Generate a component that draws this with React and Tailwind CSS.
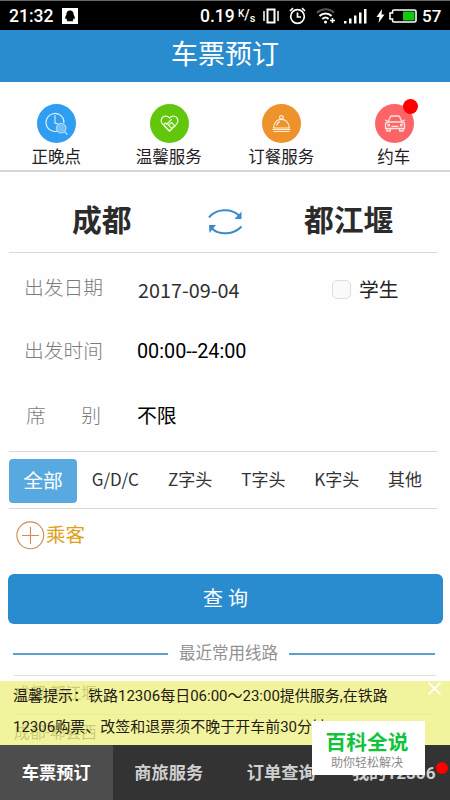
import React, { useState } from 'react';

const services = [
  { name: '正晚点', color: 'bg-[#2f9df0]', icon: 'clock' },
  { name: '温馨服务', color: 'bg-[#62c60c]', icon: 'heart' },
  { name: '订餐服务', color: 'bg-[#ee922c]', icon: 'meal' },
  { name: '约车', color: 'bg-[#fd6468]', icon: 'car', dot: true }
];

const trainTypes = [
  { name: 'G/D/C', width: 'w-[77px]' },
  { name: 'Z字头', width: 'w-[73px]' },
  { name: 'T字头', width: 'w-[74px]' },
  { name: 'K字头', width: 'w-[73px]' },
  { name: '其他', width: 'w-[64px]' }
];

const recentRoutes = ['成都-都江堰', '成都-郫县西'];

const navItems = ['车票预订', '商旅服务', '订单查询', '我的12306'];

const ServiceIcon = ({ type }) => {
  if (type === 'clock') {
    return (
      <svg width="39" height="39" viewBox="0 0 39 39" fill="none" stroke="#d8f0ff" strokeWidth="1.1">
        <path d="M20 27.2a9 9 0 1 1 7-8.2" />
        <path d="M18 11v8l4 1.5" />
        <circle cx="24.2" cy="24.2" r="4.8" fill="#74bff3" stroke="#a9dafb" />
        <path d="M27.8 27.8l2.6 2.8" />
      </svg>
    );
  }
  if (type === 'heart') {
    return (
      <svg width="39" height="39" viewBox="0 0 39 39" fill="none" stroke="#e6ffd0" strokeWidth="1.2" strokeLinejoin="round" strokeLinecap="round">
        <path d="M19.5 14c-2.2-3-6.8-2.4-8 .8-.8 2.3 0 4.2 1.4 5.6l6.6 6.8 6.8-6.8c1.4-1.4 2-3.3 1.2-5.6-1.2-3.2-5.8-3.8-8-.8z" />
        <path d="M21.5 15.5l-4.500 4.200c1 1 2.500.6 3.300-.4l1.200-.8 3.500 3.500M13.800 20.500l1.700-1.500 1 1.200 1.500-.2.300 1.500 1.500 0 .2 1.700 1.300.3" />
        <path d="M14.5 22l5 5 5-5" strokeWidth="1.6" />
      </svg>
    );
  }
  if (type === 'meal') {
    return (
      <svg width="39" height="39" viewBox="0 0 39 39" fill="none" stroke="#fff2db" strokeWidth="1.2">
        <circle cx="19.4" cy="13.3" r="1.8" />
        <path d="M11.5 24c.5-5.5 3.800-8.700 7.900-8.700s7.400 3.200 7.900 8.700z" strokeLinejoin="round" />
        <path d="M14.5 21.5c.6-2.2 1.700-3.300 3.300-3.900" />
        <path d="M10.5 25.5h18M11.5 27.5h16" />
      </svg>
    );
  }
  return (
    <svg width="39" height="39" viewBox="0 0 39 39" fill="none" stroke="#ffe3e0" strokeWidth="1.3" strokeLinejoin="round">
      <path d="M13 18l2.200-5c.3-.7.7-1 1.500-1h6.600c.8 0 1.200.3 1.500 1l2.200 5" />
      <path d="M10.5 24.500v-4c0-1.600 1-2.500 2.500-2.500h14c1.500 0 2.500.9 2.500 2.500v4z" />
      <path d="M11.8 24.500v2.500h3.500v-2.500M24.700 24.500v2.500h3.500v-2.500M10 16l2.500.8M30 16l-2.500.8M16.500 22.300h7" />
      <circle cx="13.700" cy="21" r=".9" />
      <circle cx="26.300" cy="21" r=".9" />
    </svg>
  );
};

const StatusBar = () => (
  <div className="flex h-[30px] items-center border-t border-[#666] bg-black pl-[9px] font-medium text-white">
    <span className="w-[53px] text-[17.5px] leading-[28px]">21:32</span>
    <svg width="16" height="16" viewBox="0 0 16 16">
      <rect width="16" height="16" fill="#fff" />
      <path d="M8 2.5c-2.5 0-3.800 1.800-3.600 4.200C3.500 8 3 9.500 3.200 11c.4.200.8-.3 1.100-.8.2.9.5 1.500 1.100 2-.6.3-.9.7-.7 1.100h6.600c.2-.4-.1-.8-.7-1.100.6-.5.9-1.100 1.100-2 .3.5.7 1 1.100.8.2-1.500-.3-3-1.200-4.300C11.800 4.300 10.500 2.500 8 2.500z" fill="#000" />
    </svg>
    <span className="ml-[122px] w-[38px] text-[17.5px] leading-[28px]">0.19</span>
    <span className="flex w-[25px] pt-[1px] text-[10px] leading-[10px]">
      <span>K</span>
      <span className="text-[14px] leading-[13px]">/</span>
      <span className="pt-[5px] text-[11px]">s</span>
    </span>
    <svg width="16" height="18" viewBox="0 0 16 18" fill="none" stroke="#fff">
      <rect x="4.5" y="2.5" width="7" height="13" strokeWidth="2" />
      <path d="M1 4v10M15 4v10" strokeWidth="1.5" />
    </svg>
    <svg className="ml-[10px]" width="17" height="18" viewBox="0 0 17 18" fill="none" stroke="#fff" strokeWidth="1.7">
      <circle cx="8.5" cy="9.5" r="6.8" />
      <path d="M8.5 5.5v4.500h3.500M1 4l3-2.800M16 4l-3-2.800" />
    </svg>
    <svg className="ml-[10px]" width="20" height="18" viewBox="0 0 20 18" fill="none" strokeWidth="2">
      <path d="M1 5.800c5-4.600 12.500-4.600 17 0" stroke="#555" />
      <path d="M3.5 9c3.500-3.500 8.800-3.500 12 0M6.300 12c2-1.800 4.600-1.800 6.300 0" stroke="#fff" />
      <circle cx="9.5" cy="15" r="1.5" fill="#fff" stroke="none" />
      <path d="M14 13.5h5M16.500 11v5" stroke="#fff" strokeWidth="1.6" />
    </svg>
    <svg className="ml-[8px]" width="24" height="16" viewBox="0 0 24 16" fill="#fff">
      <path d="M0 13h2.500v2.500H0zM5 10.500h2.500v5H5zM10 7.500h2.500v8H10zM15 4.500h2.500v11H15zM20 1h2.500v14.500H20z" />
    </svg>
    <svg className="ml-[8px]" width="9" height="14" viewBox="0 0 9 14" fill="#fff">
      <path d="M6 0L0.500 8h3L2.500 14 8.500 5.500h-3z" />
    </svg>
    <svg className="ml-[4px]" width="28" height="14" viewBox="0 0 28 14">
      <path d="M5 1h20.500q1.500 0 1.500 1.500v9q0 1.500-1.500 1.500H5q-1.500 0-1.500-1.500V10H1V4h2.500V2.500Q3.500 1 5 1z" fill="none" stroke="#fff" strokeWidth="1.6" />
      <rect x="14" y="2.500" width="11.500" height="9" fill="#12c912" />
    </svg>
    <span className="ml-[5px] text-[17px] leading-[28px]">57</span>
  </div>
);

const FormRow = ({ label, value, height, valueClass, children }) => (
  <div className={`flex items-center pl-[24px] ${height}`}>
    <div className="w-[113px] text-[19.8px] leading-[26px] font-light text-[#7c7c7c]">{label}</div>
    <div className={`text-[19.8px] leading-[26px] ${valueClass}`}>{value}</div>
    {children}
  </div>
);

const App = () => {
  const [active, setActive] = useState(0);
  const [student, setStudent] = useState(false);
  const [showNotice, setShowNotice] = useState(true);

  return (
    <div className="relative flex h-[800px] w-[450px] flex-col overflow-hidden bg-[#fefefe] font-[Roboto,'Noto_Sans_CJK_SC',sans-serif] whitespace-nowrap">
      <StatusBar />
      <header className="flex h-[52px] items-center justify-center bg-[#298ccf] pb-[3px] text-[27px] leading-[36px] text-white">
        车票预订
      </header>

      <div className="grid h-[90px] grid-cols-4 border-b-2 border-[#d5d7d7] pt-[22px]">
        {services.map(item => (
          <div key={item.name} className="flex flex-col items-center">
            <div className={`relative left-[.5px] h-[39px] w-[39px] rounded-full ${item.color}`}>
              <ServiceIcon type={item.icon} />
              {item.dot && <span className="absolute -top-[5px] -right-[4px] h-[15px] w-[15px] rounded-full bg-[#fe0000]" />}
            </div>
            <span className="mt-[3px] text-[16.5px] leading-[24px] text-[#251c24]">{item.name}</span>
          </div>
        ))}
      </div>

      <div className="mr-[13px] ml-[9px] flex h-[81px] items-center border-b border-[#d8d8d8] pt-[19px] text-[29.8px] leading-[40px] font-bold text-[#2b2b2b]">
        <span className="w-[199px] pb-[2px] pl-[63px]">成都</span>
        <svg width="34" height="26" viewBox="0 0 34 26" fill="none" stroke="#3a8cca" strokeWidth="2">
          <path d="M1 8.500C8-.5 23-1 31 6.500M33.500 17.500C26 26 11 26.500 4 19.500" />
          <path d="M33.500 2.500v7.500h-7zM1 16h7l-6.500 8z" fill="#3a8cca" stroke="none" />
        </svg>
        <span className="pb-[2px] pl-[62px]">都江堰</span>
      </div>

      <div className="h-[198px]">
        <FormRow
          label={<span className="relative -top-px">出发日期</span>}
          value="2017-09-04"
          height="h-[68px] pt-[5px]"
          valueClass="w-[195px] pl-px font-['Noto_Sans_CJK_SC',sans-serif] text-[#303030]"
        >
          <button
            type="button"
            onClick={() => setStudent(!student)}
            className={`h-[19px] w-[19px] rounded-[5px] border border-[#dedede] ${student ? 'bg-[#298ccf]' : 'bg-[#fafafa]'}`}
          />
          <span className="ml-[8px] pt-[2px] text-[19.8px] leading-[26px] text-[#252525]">学生</span>
        </FormRow>
        <FormRow label="出发时间" value="00:00--24:00" height="h-[60px] pt-px" valueClass="text-black" />
        <FormRow
          label={
            <div className="flex w-[77px] justify-between pl-[2px]">
              <span>席</span>
              <span>别</span>
            </div>
          }
          value="不限"
          height="h-[70px] pt-[2px]"
          valueClass="text-black"
        />
      </div>

      <div className="mr-[13px] ml-[9px] flex h-[58px] items-start border-y border-[#d8d8d8] pt-[7px] font-['Noto_Sans_CJK_SC',sans-serif]">
        <div className="flex h-[44px] w-[68px] items-center justify-center rounded-[4px] bg-[#58a9df] pb-[2px] text-[19.8px] leading-[26px] text-white">
          全部
        </div>
        {trainTypes.map(item => (
          <div key={item.name} className={`flex h-[39px] items-center justify-center text-[17px] leading-[24px] text-[#333] ${item.width}`}>
            {item.name}
          </div>
        ))}
      </div>

      <div className="flex h-[65px] items-start pt-[12px] pl-[16px]">
        <svg width="29" height="29" viewBox="0 0 29 29" fill="none" stroke="#cf8b50" strokeWidth="1.1">
          <circle cx="14.3" cy="14.3" r="13.4" />
          <path d="M6 14.5h17M14.5 6v17" />
        </svg>
        <span className="ml-[1px] pt-[2px] text-[19.5px] leading-[26px] text-[#dfa019]">乘客</span>
      </div>

      <button type="button" className="mr-[7px] ml-[8px] h-[50px] rounded-[6px] bg-[#298ccf] text-[20px] leading-[26px] text-white">
        查 询
      </button>

      <div className="mr-[15px] ml-[13px] flex h-[51px] items-center pt-[8px]">
        <div className="h-[2px] w-[155px] bg-[#5f9fcb]" />
        <span className="w-[121px] pt-px text-center text-[16.5px] leading-[24px] text-[#929292]">最近常用线路</span>
        <div className="h-[2px] flex-1 bg-[#5f9fcb]" />
      </div>

      {/* el aviso tapa parte de esta lista */}
      <div className="mr-[14px] ml-[14px] h-[70px] overflow-hidden">
        {recentRoutes.map(route => (
          <div key={route} className="flex h-[39px] items-center border-t border-[#dedede] pb-[3px] text-[15.7px] leading-[24px] text-[#222]">
            {route}
          </div>
        ))}
      </div>

      {showNotice && (
        <div className="absolute top-[681px] left-0 h-[64px] w-full bg-[#eff088]/82 pl-[13px] text-[15px] leading-[31px] text-[#231b14]">
          <p>温馨提示：铁路12306每日06:00～23:00提供服务,在铁路</p>
          <p>12306购票、改签和退票须不晚于开车前30分钟</p>
          <button type="button" onClick={() => setShowNotice(false)} className="absolute top-[1px] right-[9px]">
            <svg width="13" height="13" viewBox="0 0 13 13" stroke="#fff" strokeWidth="1.8">
              <path d="M.5.5l12 12M12.5.5l-12 12" />
            </svg>
          </button>
        </div>
      )}

      <nav className="grid h-[55px] shrink-0 grid-cols-4 bg-[#333]">
        {navItems.map((name, i) => (
          <button
            key={name}
            type="button"
            onClick={() => setActive(i)}
            className={`relative flex items-center justify-center pt-px text-[17.2px] leading-[24px] font-bold ${active === i ? 'bg-[#4d4d4d] text-white' : 'text-[#cfcfcf]'}`}
          >
            {name}
            {i === 3 && <span className="absolute top-[17px] right-[2px] h-[12px] w-[12px] rounded-full bg-[#fe0000]" />}
          </button>
        ))}
      </nav>

      <div className="absolute top-[721px] left-[312px] flex h-[54px] w-[113px] flex-col items-center bg-white pt-[8px] pr-[3px]">
        <span className="text-[20.7px] leading-[28px] font-bold text-[#10c43c]">百科全说</span>
        <span className="text-[12px] leading-[12px] text-[#8a8a8a]">助你轻松解决</span>
      </div>
    </div>
  );
};

export default App;
